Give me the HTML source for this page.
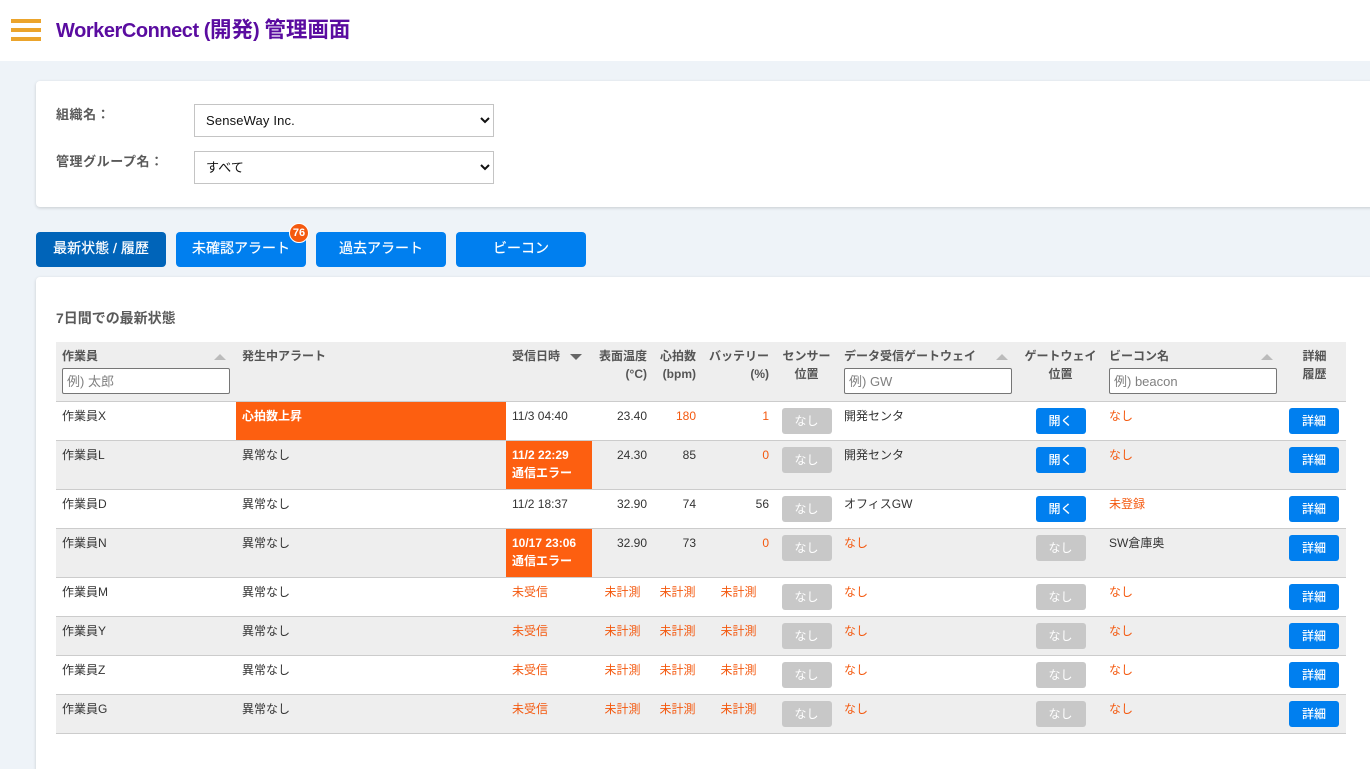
<!DOCTYPE html>
<html lang="ja">
<head>
<meta charset="utf-8">
<title>WorkerConnect (開発) 管理画面</title>
<style>
*{box-sizing:border-box}
html,body{margin:0;padding:0;overflow:hidden;width:1370px;height:769px}
body{position:relative;background:#eef3f8;font-family:"Liberation Sans","Noto Sans CJK JP",sans-serif;color:#333;font-size:12px}
#w{position:absolute;left:0;top:0;width:1370px;height:769px;overflow:hidden}
.hdr{position:absolute;left:0;top:0;width:1370px;height:61px;background:#fff}
.bar{position:absolute;left:11px;width:30px;height:4px;background:#eba42c}
.title{position:absolute;left:56px;top:16px;font-size:20px;line-height:28px;font-weight:700;color:#5a0ca0;white-space:nowrap;letter-spacing:-.45px}
.title span{font-size:21.5px;letter-spacing:0}
.card{position:absolute;left:36px;width:1340px;background:#fff;border-radius:4px;box-shadow:0 1px 3px rgba(0,0,0,.16)}
.lbl{position:absolute;left:56px;font-size:13px;line-height:18px;font-weight:700;color:#5a5a5a;white-space:nowrap;letter-spacing:.55px}
select{position:absolute;left:194px;width:300px;height:33px;background:#fff;border:1px solid #c4c4c4;border-radius:0;appearance:none;-webkit-appearance:none;padding:0 0 0 11px;font:13px "Liberation Sans","Noto Sans CJK JP",sans-serif;letter-spacing:.15px;color:#111}
.chev{position:absolute;left:480px;width:10px;height:7px}
.tab{position:absolute;top:232px;width:130px;height:35px;border-radius:4px;background:#007fef;color:#fff;font-size:14px;line-height:33px;font-weight:400;text-align:center;white-space:nowrap;-webkit-text-stroke:.2px #fff}
.badge{position:absolute;left:289px;top:223px;width:20px;height:20px;border-radius:50%;background:#f4590f;border:1px solid #fff;color:#fff;font-size:11px;line-height:18px;font-weight:700;text-align:center}
h2{position:absolute;left:56px;top:309px;margin:0;font-size:14px;line-height:18px;font-weight:700;color:#5a5a5a;letter-spacing:-.02px}
table{position:absolute;left:56px;top:342px;width:1290px;border-collapse:separate;border-spacing:0;table-layout:fixed;font-size:12px;line-height:18px;color:#333}
th{background:#eee;height:60px;vertical-align:top;padding:5px 6px 0;font-weight:700;font-size:12px;line-height:18px;color:#555;border-bottom:1px solid #ccc;text-align:left;position:relative;white-space:nowrap}
td{height:39px;vertical-align:top;padding:5px 6px 0;border-bottom:1px solid #ccc;white-space:nowrap;overflow:visible}
tr.t td{height:49px}
tr.g td{background:#eee}
.r{text-align:right}.c{text-align:center}
.e{color:#f4590f}
td.a{background:#fd5f10!important;color:#fff;font-weight:700}
.b{display:block;width:50px;height:26px;border-radius:3px;background:#007fef;color:#fff;line-height:26px;text-align:center;margin:1px auto 0;font-weight:500}
td.l .b{margin:1px 0 0}
.n{background:#c8c8c8;font-weight:400}
th input{display:block;width:168px;height:26px;margin-top:3px;border:1px solid #767676;border-radius:2px;background:#fff;padding:0 9px 0 4px;font:13px "Liberation Sans","Noto Sans CJK JP",sans-serif}
th input::placeholder{color:#808080;opacity:1}
.up,.dn{position:absolute;top:12px;width:0;height:0;border-left:6px solid transparent;border-right:6px solid transparent}
.up{border-bottom:6px solid #bbb}
.dn{border-top:6px solid #666}
</style>
</head>
<body>
<div id="w">
<div class="hdr"></div>
<div class="bar" style="top:19px"></div>
<div class="bar" style="top:28px"></div>
<div class="bar" style="top:37px"></div>
<div class="title">WorkerConnect (<span>開発</span>) <span>管理画面</span></div>

<div class="card" style="top:81px;height:126px"></div>
<div class="lbl" style="top:106px">組織名：</div>
<select style="top:104px"><option>SenseWay Inc.</option></select>
<svg class="chev" style="top:117px" viewBox="0 0 10 7"><path d="M1 1l4 4 4-4" fill="none" stroke="#111" stroke-width="2"/></svg>
<div class="lbl" style="top:153px">管理グループ名：</div>
<select style="top:151px"><option>すべて</option></select>
<svg class="chev" style="top:164px" viewBox="0 0 10 7"><path d="M1 1l4 4 4-4" fill="none" stroke="#111" stroke-width="2"/></svg>

<div class="tab" style="left:36px;background:#0064b9">最新状態 / 履歴</div>
<div class="tab" style="left:176px">未確認アラート</div>
<div class="tab" style="left:316px">過去アラート</div>
<div class="tab" style="left:456px">ビーコン</div>
<div class="badge">76</div>

<div class="card" style="top:277px;height:500px"></div>
<h2>7日間での最新状態</h2>

<table>
<colgroup><col style="width:180px"><col style="width:270px"><col style="width:86px"><col style="width:61px"><col style="width:49px"><col style="width:73px"><col style="width:63px"><col style="width:180px"><col style="width:85px"><col style="width:180px"><col style="width:63px"></colgroup>
<thead><tr>
<th>作業員<span class="up" style="left:158px"></span><input placeholder="例) 太郎"></th>
<th>発生中アラート</th>
<th>受信日時<span class="dn" style="left:64px"></span></th>
<th class="r">表面温度<br>(°C)</th>
<th class="r">心拍数<br>(bpm)</th>
<th class="r">バッテリー<br>(%)</th>
<th class="c">センサー<br>位置</th>
<th>データ受信ゲートウェイ<span class="up" style="left:158px"></span><input placeholder="例) GW"></th>
<th class="c">ゲートウェイ<br>位置</th>
<th>ビーコン名<span class="up" style="left:158px"></span><input placeholder="例) beacon"></th>
<th class="c">詳細<br>履歴</th>
</tr></thead>
<tbody>
<tr><td>作業員X</td><td class="a">心拍数上昇</td><td>11/3 04:40</td><td class="r">23.40</td><td class="r e">180</td><td class="r e">1</td><td><span class="b n">なし</span></td><td>開発センタ</td><td><span class="b">開く</span></td><td class="e">なし</td><td class="l"><span class="b">詳細</span></td></tr>
<tr class="g t"><td>作業員L</td><td>異常なし</td><td class="a">11/2 22:29<br>通信エラー</td><td class="r">24.30</td><td class="r">85</td><td class="r e">0</td><td><span class="b n">なし</span></td><td>開発センタ</td><td><span class="b">開く</span></td><td class="e">なし</td><td class="l"><span class="b">詳細</span></td></tr>
<tr><td>作業員D</td><td>異常なし</td><td>11/2 18:37</td><td class="r">32.90</td><td class="r">74</td><td class="r">56</td><td><span class="b n">なし</span></td><td>オフィスGW</td><td><span class="b">開く</span></td><td class="e">未登録</td><td class="l"><span class="b">詳細</span></td></tr>
<tr class="g t"><td>作業員N</td><td>異常なし</td><td class="a">10/17 23:06<br>通信エラー</td><td class="r">32.90</td><td class="r">73</td><td class="r e">0</td><td><span class="b n">なし</span></td><td class="e">なし</td><td><span class="b n">なし</span></td><td>SW倉庫奥</td><td class="l"><span class="b">詳細</span></td></tr>
<tr><td>作業員M</td><td>異常なし</td><td class="e">未受信</td><td class="c e">未計測</td><td class="c e">未計測</td><td class="c e">未計測</td><td><span class="b n">なし</span></td><td class="e">なし</td><td><span class="b n">なし</span></td><td class="e">なし</td><td class="l"><span class="b">詳細</span></td></tr>
<tr class="g"><td>作業員Y</td><td>異常なし</td><td class="e">未受信</td><td class="c e">未計測</td><td class="c e">未計測</td><td class="c e">未計測</td><td><span class="b n">なし</span></td><td class="e">なし</td><td><span class="b n">なし</span></td><td class="e">なし</td><td class="l"><span class="b">詳細</span></td></tr>
<tr><td>作業員Z</td><td>異常なし</td><td class="e">未受信</td><td class="c e">未計測</td><td class="c e">未計測</td><td class="c e">未計測</td><td><span class="b n">なし</span></td><td class="e">なし</td><td><span class="b n">なし</span></td><td class="e">なし</td><td class="l"><span class="b">詳細</span></td></tr>
<tr class="g"><td>作業員G</td><td>異常なし</td><td class="e">未受信</td><td class="c e">未計測</td><td class="c e">未計測</td><td class="c e">未計測</td><td><span class="b n">なし</span></td><td class="e">なし</td><td><span class="b n">なし</span></td><td class="e">なし</td><td class="l"><span class="b">詳細</span></td></tr>
</tbody>
</table>
</div>
</body>
</html>
